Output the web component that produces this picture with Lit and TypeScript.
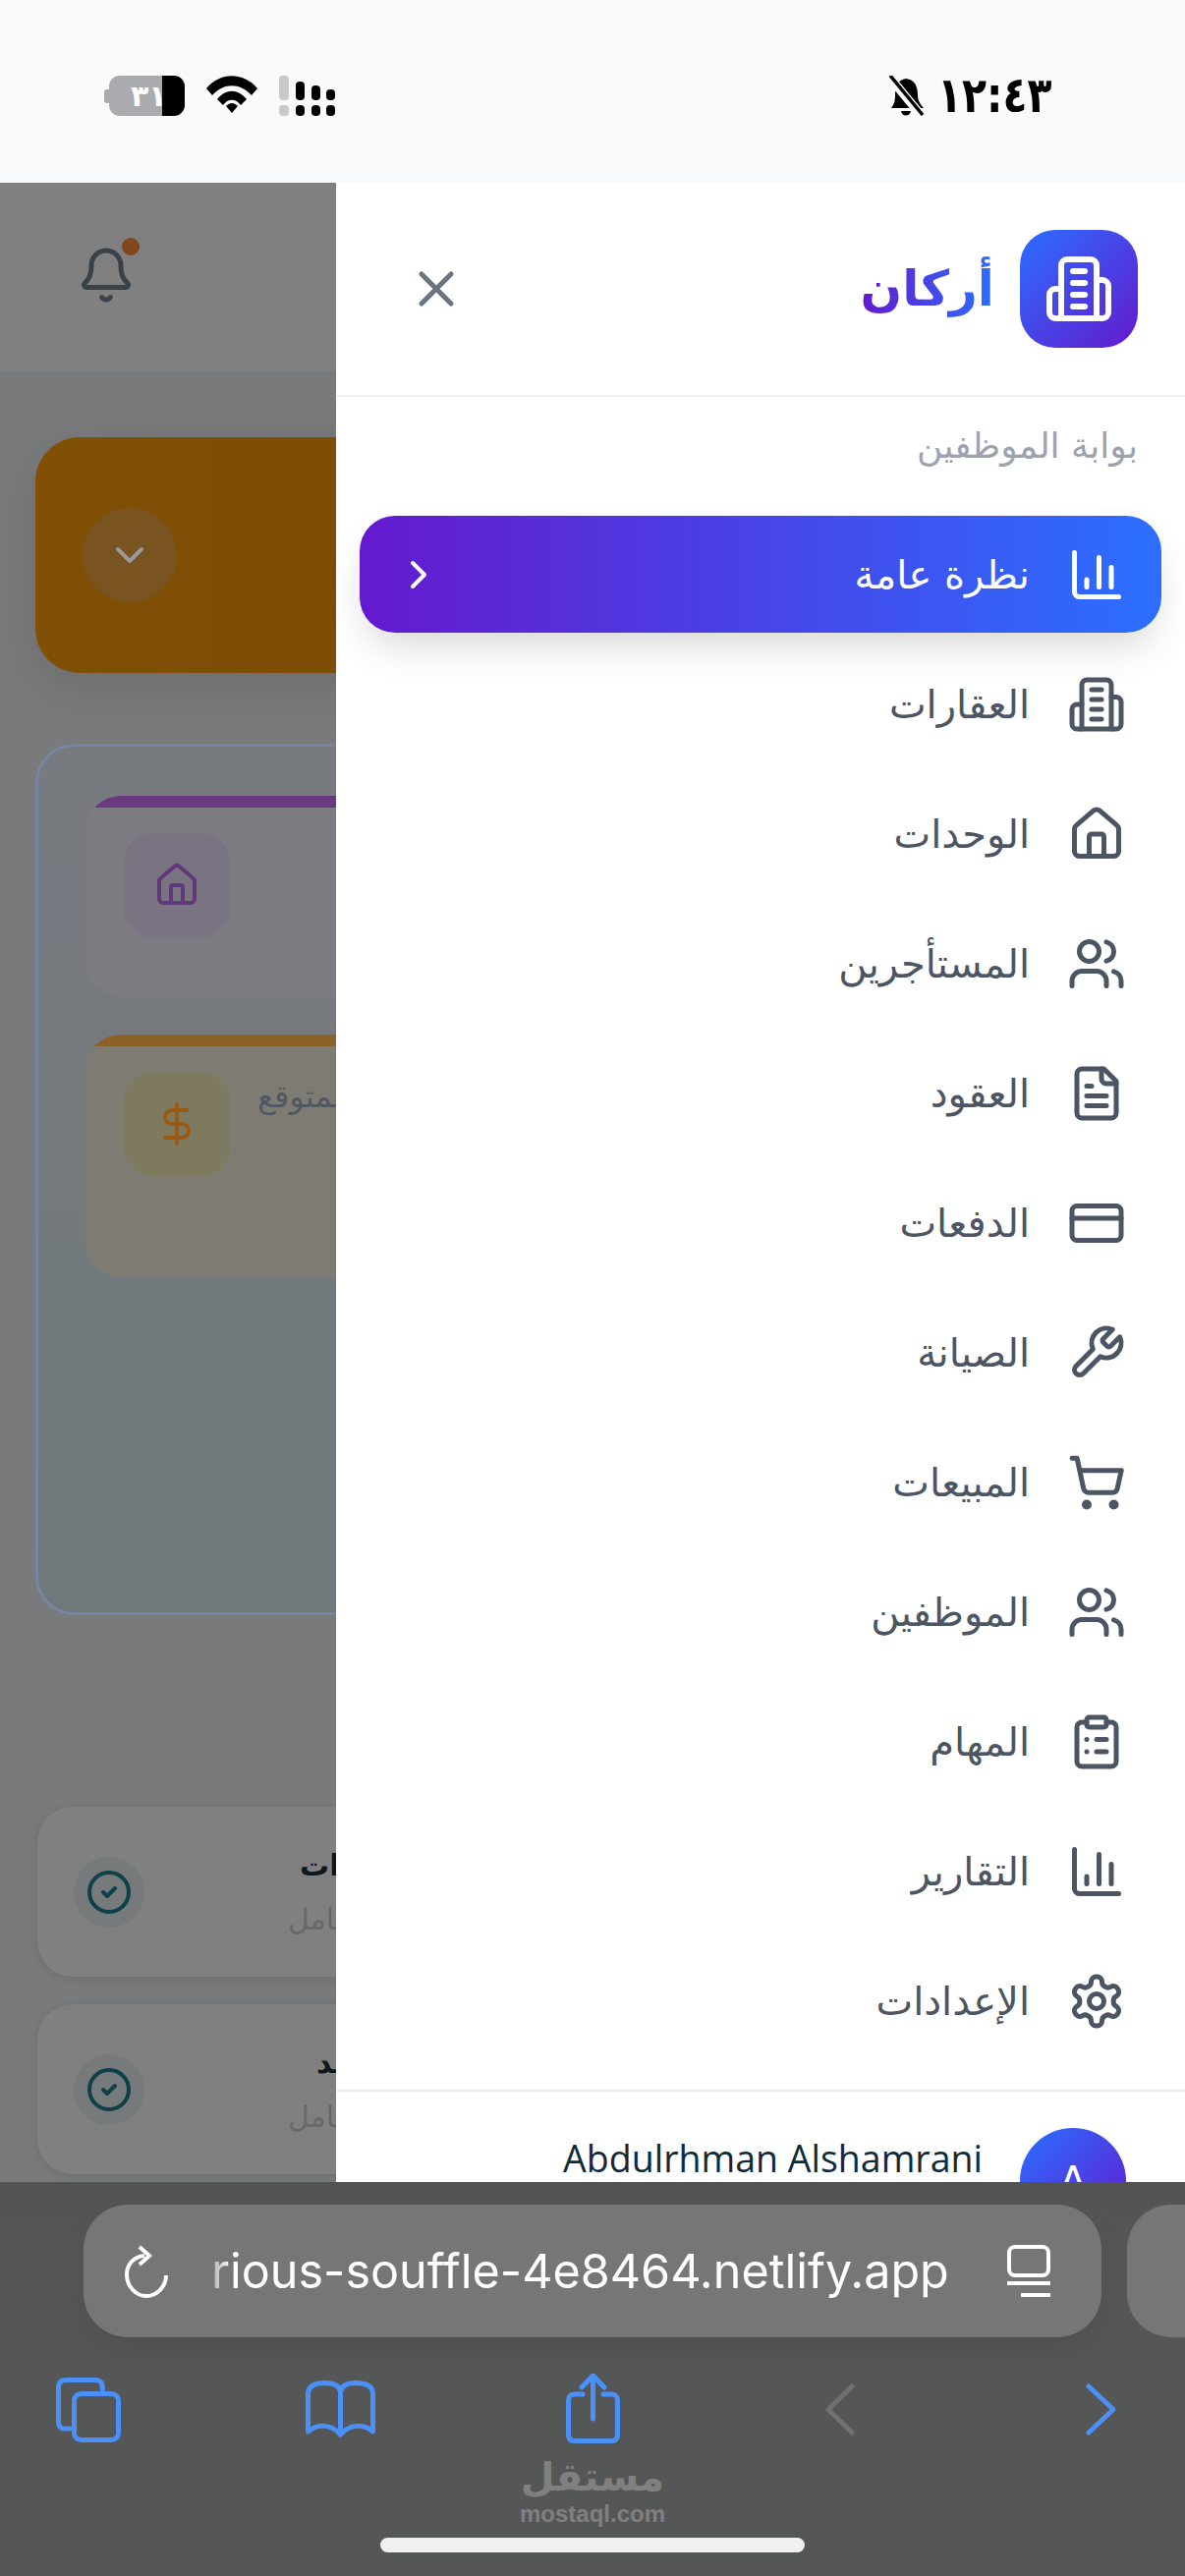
import { LitElement, html, svg, css } from "lit";
import { customElement } from "lit/decorators.js";

// lucide style icon paths, viewBox 24
const icons: Record<string, unknown> = {
  building: svg`<path d="M6 22V4a2 2 0 0 1 2-2h8a2 2 0 0 1 2 2v18Z"/><path d="M6 12H4a2 2 0 0 0-2 2v6a2 2 0 0 0 2 2h2"/><path d="M18 9h2a2 2 0 0 1 2 2v9a2 2 0 0 1-2 2h-2"/><path d="M10 6h4"/><path d="M10 10h4"/><path d="M10 14h4"/><path d="M10 18h4"/>`,
  chart: svg`<path d="M3 3v16a2 2 0 0 0 2 2h16"/><path d="M18 17V9"/><path d="M13 17V5"/><path d="M8 17v-3"/>`,
  home: svg`<path d="M15 21v-8a1 1 0 0 0-1-1h-4a1 1 0 0 0-1 1v8"/><path d="M3 10a2 2 0 0 1 .709-1.528l7-5.999a2 2 0 0 1 2.582 0l7 5.999A2 2 0 0 1 21 10v9a2 2 0 0 1-2 2H5a2 2 0 0 1-2-2z"/>`,
  users: svg`<path d="M16 21v-2a4 4 0 0 0-4-4H6a4 4 0 0 0-4 4v2"/><circle cx="9" cy="7" r="4"/><path d="M22 21v-2a4 4 0 0 0-3-3.87"/><path d="M16 3.13a4 4 0 0 1 0 7.75"/>`,
  file: svg`<path d="M15 2H6a2 2 0 0 0-2 2v16a2 2 0 0 0 2 2h12a2 2 0 0 0 2-2V7Z"/><path d="M14 2v4a2 2 0 0 0 2 2h4"/><path d="M10 9H8"/><path d="M16 13H8"/><path d="M16 17H8"/>`,
  card: svg`<rect width="20" height="14" x="2" y="5" rx="2"/><line x1="2" x2="22" y1="10" y2="10"/>`,
  wrench: svg`<path d="M14.7 6.3a1 1 0 0 0 0 1.4l1.6 1.6a1 1 0 0 0 1.4 0l3.77-3.77a6 6 0 0 1-7.94 7.94l-6.91 6.91a2.12 2.12 0 0 1-3-3l6.91-6.91a6 6 0 0 1 7.94-7.94l-3.76 3.76z"/>`,
  cart: svg`<circle cx="8" cy="21" r="1"/><circle cx="19" cy="21" r="1"/><path d="M2.05 2.05h2l2.66 12.42a2 2 0 0 0 2 1.58h9.78a2 2 0 0 0 1.95-1.57l1.65-7.43H5.12"/>`,
  clipboard: svg`<rect width="8" height="4" x="8" y="2" rx="1"/><path d="M16 4h2a2 2 0 0 1 2 2v14a2 2 0 0 1-2 2H6a2 2 0 0 1-2-2V6a2 2 0 0 1 2-2h2"/><path d="M12 11h4"/><path d="M12 16h4"/><path d="M8 11h.01"/><path d="M8 16h.01"/>`,
  gear: svg`<path d="M12.22 2h-.44a2 2 0 0 0-2 2v.18a2 2 0 0 1-1 1.73l-.43.25a2 2 0 0 1-2 0l-.15-.08a2 2 0 0 0-2.73.73l-.22.38a2 2 0 0 0 .73 2.73l.15.1a2 2 0 0 1 1 1.72v.51a2 2 0 0 1-1 1.74l-.15.09a2 2 0 0 0-.73 2.73l.22.38a2 2 0 0 0 2.73.73l.15-.08a2 2 0 0 1 2 0l.43.25a2 2 0 0 1 1 1.73V20a2 2 0 0 0 2 2h.44a2 2 0 0 0 2-2v-.18a2 2 0 0 1 1-1.73l.43-.25a2 2 0 0 1 2 0l.15.08a2 2 0 0 0 2.73-.73l.22-.39a2 2 0 0 0-.73-2.73l-.15-.08a2 2 0 0 1-1-1.74v-.5a2 2 0 0 1 1-1.74l.15-.09a2 2 0 0 0 .73-2.73l-.22-.38a2 2 0 0 0-2.73-.73l-.15.08a2 2 0 0 1-2 0l-.43-.25a2 2 0 0 1-1-1.73V4a2 2 0 0 0-2-2z"/><circle cx="12" cy="12" r="3"/>`,
  x: svg`<path d="M18 6 6 18"/><path d="m6 6 12 12"/>`,
  chevronRight: svg`<path d="m9 18 6-6-6-6"/>`,
  chevronDown: svg`<path d="m6 9 6 6 6-6"/>`,
  bell: svg`<path d="M10.268 21a2 2 0 0 0 3.464 0"/><path d="M3.262 15.326A1 1 0 0 0 4 17h16a1 1 0 0 0 .74-1.673C19.41 13.956 18 12.499 18 8A6 6 0 0 0 6 8c0 4.499-1.411 5.956-2.738 7.326"/>`,
  dollar: svg`<line x1="12" x2="12" y1="2" y2="22"/><path d="M17 5H9.5a3.5 3.5 0 0 0 0 7h5a3.5 3.5 0 0 1 0 7H6"/>`,
  check: svg`<circle cx="12" cy="12" r="10"/><path d="m9 12 2 2 4-4"/>`,
};

const icon = (name: string, size: number, cls = "") => html`<svg
  class=${cls}
  width=${size}
  height=${size}
  viewBox="0 0 24 24"
  fill="none"
  stroke="currentColor"
  stroke-width="2"
  stroke-linecap="round"
  stroke-linejoin="round"
>${icons[name]}</svg>`;

const menu = [
  { label: "نظرة عامة", icon: "chart", active: true },
  { label: "العقارات", icon: "building" },
  { label: "الوحدات", icon: "home" },
  { label: "المستأجرين", icon: "users" },
  { label: "العقود", icon: "file" },
  { label: "الدفعات", icon: "card" },
  { label: "الصيانة", icon: "wrench" },
  { label: "المبيعات", icon: "cart" },
  { label: "الموظفين", icon: "users" },
  { label: "المهام", icon: "clipboard" },
  { label: "التقارير", icon: "chart" },
  { label: "الإعدادات", icon: "gear" },
];

@customElement("app-root")
export class AppRoot extends LitElement {
  statusBar() {
    return html`
      <div class="status">
        <div class="status-left">
          <div class="battery">
            <span class="battery-cap"></span>
            <span class="battery-body"><span class="battery-num">٣١</span></span>
          </div>
          <svg width="52" height="38" viewBox="0 0 52 38" class="wifi">
            <path d="M0 13 C14 -4 38 -4 52 13 L46 20 C34 7 18 7 6 20Z" />
            <path d="M11 24 C20 13 32 13 41 24 L35 30 C30 23 22 23 17 30Z" />
            <path d="M20 31 C24 27 28 27 32 31 L26 38Z" />
          </svg>
          <svg width="59" height="41" viewBox="0 0 59 41" class="signal">
            <rect x="0" y="0" width="10" height="25" rx="4" fill="#c7c9cd" />
            <rect x="0" y="30" width="10" height="11" rx="4" fill="#c7c9cd" />
            <rect x="17" y="6" width="9" height="19" rx="4" />
            <rect x="17" y="30" width="9" height="11" rx="4" />
            <rect x="33" y="10" width="9" height="15" rx="4" />
            <rect x="33" y="30" width="9" height="11" rx="4" />
            <rect x="48" y="14" width="9" height="11" rx="4" />
            <rect x="48" y="30" width="9" height="11" rx="4" />
          </svg>
        </div>
        <div class="status-right">
          <svg width="40" height="42" viewBox="0 0 40 42" class="mute">
            <path d="M20 3 C29 4 32 11 32 20 C32 26 35 29 38 33 L5 33 C8 29 9 26 9 20 C9 11 12 4 20 3Z" />
            <path d="M15 36 H25 C24 42 16 42 15 36Z" />
            <path d="M3 1 L36 41" stroke="#f9fafb" stroke-width="9" />
            <path d="M4 0 L37 40" stroke="#000" stroke-width="3.5" />
          </svg>
          <span class="time">١٢:٤٣</span>
        </div>
      </div>
    `;
  }

  // the dimmed page behind the drawer, colours as they look under the overlay
  backPage() {
    return html`
      <div class="page">
        <div class="topbar">
          <div class="bell-wrap">
            ${icon("bell", 60)}
            <span class="bell-dot"></span>
          </div>
        </div>
        <div class="hero">
          <div class="hero-toggle">${icon("chevronDown", 48)}</div>
        </div>
        <div class="panel">
          <div class="stat purple">
            <div class="band"></div>
            <div class="stat-body">
              <div class="stat-icon">${icon("home", 48)}</div>
            </div>
          </div>
          <div class="stat amber">
            <div class="band"></div>
            <div class="stat-body">
              <div class="stat-icon">${icon("dollar", 48)}</div>
              <div class="stat-label">الإيراد المتوقع</div>
            </div>
          </div>
        </div>
        <div class="rows">
          <div class="row">
            <div class="row-icon">${icon("check", 48)}</div>
            <div class="row-text">
              <div class="row-title">الإشعارات</div>
              <div class="row-sub">مكتمل بالكامل</div>
            </div>
          </div>
          <div class="row">
            <div class="row-icon">${icon("check", 48)}</div>
            <div class="row-text">
              <div class="row-title short">عقد</div>
              <div class="row-sub">مكتمل بالكامل</div>
            </div>
          </div>
        </div>
      </div>
    `;
  }

  drawer() {
    return html`
      <aside class="drawer" dir="rtl">
        <div class="drawer-head">
          <div class="brand">
            <div class="logo">${icon("building", 72)}</div>
            <div class="brand-name">أركان</div>
          </div>
          <div class="close">${icon("x", 60)}</div>
        </div>
        <div class="portal">بوابة الموظفين</div>
        <nav class="nav">
          ${menu.map(
            (m) => html`
              <div class="item ${m.active ? "active" : ""}">
                ${icon(m.icon, 60)}
                <span class="item-label">${m.label}</span>
                ${m.active ? icon("chevronRight", 48, "item-chevron") : ""}
              </div>
            `,
          )}
        </nav>
        <div class="user">
          <div class="avatar">A</div>
          <div class="user-name" dir="ltr">Abdulrhman Alshamrani</div>
        </div>
      </aside>
    `;
  }

  safari() {
    return html`
      <div class="safari">
        <div class="url-row">
          <div class="url-pill">
            <svg width="44" height="54" viewBox="0 0 44 54" class="reload">
              <path d="M20 11 C8 12 2 21 2 30 C2 42 11 52 22 52 C33 52 42 42 42 31" />
              <path d="M15 2 L25 11 L15 20" />
            </svg>
            <span class="url">rious-souffle-4e8464.netlify.app</span>
            <svg width="44" height="54" viewBox="0 0 44 54" class="reader">
              <rect x="2" y="2" width="40" height="29" rx="6" />
              <path d="M0 39 H44" />
              <path d="M14 51 H44" />
            </svg>
          </div>
          <div class="url-next"></div>
        </div>
        <div class="tools">
          <svg width="66" height="66" viewBox="0 0 66 66" class="tabs">
            <path d="M14 52 H9 C4 52 2.500 49 2.500 45 V10 C2.500 5 5 2.500 10 2.500 H40 C45 2.500 47.500 5 47.500 12" />
            <rect x="18.500" y="16.500" width="45" height="47" rx="7" />
          </svg>
          <svg width="71" height="58" viewBox="0 0 71 58" class="book">
            <path d="M35.500 12 C35.500 6 29 2.500 20 2.500 C8 2.500 2.500 7 2.500 14 V52 C12 44 26 44 35.500 55 C45 44 59 44 68.500 52 V14 C68.500 7 63 2.500 51 2.500 C42 2.500 35.500 6 35.500 12 V52" />
          </svg>
          <svg width="55" height="71" viewBox="0 0 55 71" class="share">
            <path d="M17 21 H9 C4.500 21 2.500 23 2.500 28 V62 C2.500 66 4.500 68.500 9 68.500 H46 C50.500 68.500 52.500 66 52.500 62 V28 C52.500 23 50.500 21 46 21 H38" />
            <path d="M27.500 3 V46" />
            <path d="M16 14 L27.500 2 L39 14" />
          </svg>
          <svg width="30" height="53" viewBox="0 0 30 53" class="back">
            <path d="M27 3 L3 26.500 L27 50" />
          </svg>
          <svg width="31" height="53" viewBox="0 0 31 53" class="forward">
            <path d="M3 3 L28 26.500 L3 50" />
          </svg>
        </div>
        <div class="watermark">
          <div class="wm-ar">مستقل</div>
          <div class="wm-en">mostaql.com</div>
        </div>
        <div class="home-bar"></div>
      </div>
    `;
  }

  render() {
    return html`
      ${this.statusBar()}
      <div class="stage">${this.backPage()} ${this.drawer()}</div>
      ${this.safari()}
    `;
  }

  static styles = css`
    :host {
      display: block;
      width: 1206px;
      height: 2622px;
      overflow: hidden;
      font-family: "DejaVu Sans", sans-serif;
      background: #f9fafb;
    }

    /* status bar */
    .status {
      height: 186px;
      box-sizing: border-box;
      padding: 77px 137px 0 106px;
      display: flex;
      justify-content: space-between;
      align-items: flex-start;
      background: #f9fafb;
    }
    .status-left {
      display: flex;
      align-items: flex-start;
      gap: 22px;
    }
    .status-right {
      display: flex;
      align-items: flex-start;
      gap: 12px;
    }
    .battery {
      display: flex;
      align-items: center;
      width: 82px;
      height: 41px;
    }
    .battery-cap {
      width: 5px;
      height: 14px;
      border-radius: 3px 0 0 3px;
      background: #a9abaf;
    }
    .battery-body {
      flex: 1;
      height: 100%;
      border-radius: 11px;
      background: linear-gradient(90deg, #a9abaf 0 70%, #000 70%);
      display: flex;
      align-items: center;
      padding-left: 22px;
      box-sizing: border-box;
    }
    .battery-num {
      color: #fff;
      font-size: 30px;
      font-weight: 700;
      line-height: 1;
    }
    .wifi,
    .signal,
    .mute {
      display: block;
      fill: #000;
    }
    .time {
      display: block;
      width: 115px;
      font-size: 50px;
      font-weight: 700;
      line-height: 40px;
      white-space: nowrap;
      color: #000;
      transform: scaleX(0.82);
      transform-origin: left center;
    }

    .stage {
      position: relative;
      height: 2035px;
      overflow: hidden;
    }

    /* page under the drawer */
    .page {
      background: #797a7b;
      height: 100%;
      display: flex;
      flex-direction: column;
      padding-bottom: 40px;
      box-sizing: border-box;
    }
    .topbar {
      height: 192px;
      flex: none;
      background: #808080;
      padding: 64px 0 0 78px;
      box-sizing: border-box;
    }
    .bell-wrap {
      position: relative;
      width: 60px;
      color: #3a4248;
    }
    .bell-wrap svg {
      display: block;
    }
    .bell-dot {
      position: absolute;
      top: -8px;
      right: -4px;
      width: 18px;
      height: 18px;
      border-radius: 50%;
      background: #80481c;
    }
    .hero {
      flex: none;
      margin: 67px 36px 0;
      height: 240px;
      border-radius: 45px;
      background: linear-gradient(90deg, #815006, #7c4a06 55%);
      box-shadow: 0 16px 40px rgba(90, 90, 90, 0.35);
      display: flex;
      align-items: center;
      padding-left: 48px;
    }
    .hero-toggle {
      width: 96px;
      height: 96px;
      border-radius: 50%;
      background: #7a5420;
      color: #9a9a9a;
      display: flex;
      align-items: center;
      justify-content: center;
    }
    .panel {
      flex: none;
      margin: 72px 36px 0;
      height: 887px;
      box-sizing: border-box;
      padding: 50px 48px 0;
      border: 3px solid #7585a2;
      border-radius: 40px;
      background: linear-gradient(180deg, #787a80, #6f797b);
      display: flex;
      flex-direction: column;
      gap: 38px;
    }
    .stat {
      border-radius: 36px;
      overflow: hidden;
    }
    .band {
      height: 12px;
    }
    .stat-body {
      display: flex;
      align-items: flex-start;
      gap: 28px;
      padding: 26px 39px 0;
    }
    .stat-icon {
      width: 108px;
      height: 106px;
      flex: none;
      border-radius: 30px;
      display: flex;
      align-items: center;
      justify-content: center;
    }
    .purple {
      height: 205px;
      background: #7c7b82;
    }
    .purple .band {
      background: #6a3a80;
    }
    .purple .stat-icon {
      background: #7a7382;
      color: #603a78;
    }
    .amber {
      height: 247px;
      background: #7e7c72;
    }
    .amber .band {
      background: #8a6128;
    }
    .amber .stat-icon {
      background: #7d7a60;
      color: #9a5a14;
    }
    .stat-label {
      font-size: 32px;
      color: #4f5862;
      white-space: nowrap;
      direction: ltr;
      margin-top: 6px;
    }
    .rows {
      flex: none;
      margin: 195px 36px 0 38px;
      display: flex;
      flex-direction: column;
      gap: 28px;
    }
    .row {
      height: 173px;
      border-radius: 36px;
      background: #808080;
      box-shadow: 0 2px 8px rgba(60, 60, 60, 0.2);
      display: flex;
      align-items: center;
      padding-left: 37px;
    }
    .row-icon {
      width: 72px;
      height: 72px;
      flex: none;
      border-radius: 50%;
      background: #767a7a;
      color: #0f3f48;
      display: flex;
      align-items: center;
      justify-content: center;
    }
    .row-text {
      margin-left: 146px;
      white-space: nowrap;
    }
    .row-title {
      font-size: 30px;
      font-weight: 700;
      color: #10171c;
      padding-left: 12px;
    }
    .row-title.short {
      padding-left: 29px;
    }
    .row-sub {
      margin-top: 20px;
      font-size: 30px;
      color: #66686b;
    }

    /* drawer */
    .drawer {
      position: absolute;
      top: 0;
      right: 0;
      bottom: 0;
      width: 864px;
      background: #fff;
    }
    .drawer-head {
      height: 218px;
      box-sizing: border-box;
      border-bottom: 2px solid #eceef0;
      padding: 48px 48px 0 72px;
      display: flex;
      justify-content: space-between;
      align-items: flex-start;
    }
    .brand {
      display: flex;
      align-items: center;
      gap: 26px;
    }
    .logo {
      width: 120px;
      height: 120px;
      border-radius: 36px;
      background: linear-gradient(135deg, #2b6fff, #6419ce);
      color: #fff;
      display: flex;
      align-items: center;
      justify-content: center;
    }
    .brand-name {
      font-size: 50px;
      font-weight: 700;
      line-height: 90px;
      background: linear-gradient(270deg, #2b6fff, #6419ce);
      -webkit-background-clip: text;
      background-clip: text;
      color: transparent;
    }
    .close {
      height: 120px;
      display: flex;
      align-items: center;
      color: #6b7280;
    }
    .portal {
      height: 60px;
      margin-top: 20px;
      padding: 0 48px;
      font-size: 36px;
      line-height: 60px;
      color: #9ca3af;
    }
    .nav {
      margin-top: 41px;
      padding: 0 24px;
      display: flex;
      flex-direction: column;
      gap: 13px;
    }
    .item {
      height: 119px;
      box-sizing: border-box;
      padding: 0 36px;
      border-radius: 36px;
      display: flex;
      align-items: center;
      gap: 38px;
      color: #4b5563;
    }
    .item svg {
      flex: none;
    }
    .item-label {
      font-size: 40px;
    }
    .item.active {
      color: #fff;
      background: linear-gradient(270deg, #2b6fff, #6419ce);
      box-shadow: 0 20px 40px -8px rgba(0, 0, 0, 0.16);
    }
    .item-chevron {
      margin-right: auto;
    }
    .user {
      margin-top: 31px;
      border-top: 2px solid #eceef0;
      padding: 37px 60px 0 0;
      display: flex;
      align-items: flex-start;
      gap: 38px;
    }
    .avatar {
      width: 108px;
      height: 108px;
      flex: none;
      border-radius: 50%;
      background: linear-gradient(135deg, #2b6fff, #6419ce);
      color: #fff;
      font-size: 40px;
      display: flex;
      align-items: center;
      justify-content: center;
    }
    .user-name {
      font-family: "Open Sans", sans-serif;
      font-size: 37.500px;
      line-height: 42px;
      margin-top: 10px;
      color: #0f2b3a;
    }

    /* safari chrome */
    .safari {
      position: relative;
      height: 401px;
      overflow: hidden;
      background: linear-gradient(180deg, #525353, #555757 60px);
    }
    .url-row {
      display: flex;
      gap: 26px;
      padding: 23px 0 0 85px;
    }
    .url-pill {
      width: 1036px;
      height: 135px;
      flex: none;
      box-sizing: border-box;
      border-radius: 45px;
      background: #757676;
      box-shadow: 0 12px 30px rgba(0, 0, 0, 0.08);
      display: flex;
      align-items: center;
      padding: 0 52px 0 42px;
      gap: 44px;
    }
    .url-next {
      width: 200px;
      height: 135px;
      flex: none;
      border-radius: 45px;
      background: #757676;
    }
    .reload,
    .reader {
      flex: none;
      fill: none;
      stroke: #fff;
      stroke-width: 4;
    }
    .url {
      flex: 1;
      font-family: Inter, sans-serif;
      font-size: 48.500px;
      color: #fff;
      white-space: nowrap;
      -webkit-mask-image: linear-gradient(90deg, rgba(0, 0, 0, 0.4), #000 20px);
      mask-image: linear-gradient(90deg, rgba(0, 0, 0, 0.4), #000 20px);
    }
    .tools {
      display: flex;
      align-items: flex-start;
      margin-top: 41px;
      padding-left: 57px;
    }
    .tools svg {
      flex: none;
      fill: none;
      stroke: #4a90f8;
      stroke-width: 5;
      stroke-linecap: round;
      stroke-linejoin: round;
    }
    .book {
      margin: 3px 0 0 188px;
    }
    .share {
      margin: -4px 0 0 194px;
    }
    .tools .back {
      margin: 6px 0 0 209px;
      stroke: #6f7172;
    }
    .forward {
      margin: 6px 0 0 235px;
    }
    .watermark {
      position: absolute;
      left: 503px;
      top: 274px;
      width: 200px;
      text-align: center;
      color: #808080;
    }
    .wm-ar {
      font-size: 40px;
      font-weight: 700;
      line-height: 52px;
    }
    .wm-en {
      font-family: "Liberation Sans", sans-serif;
      font-size: 24px;
      font-weight: 700;
      line-height: 24px;
    }
    .home-bar {
      position: absolute;
      left: 387px;
      top: 362px;
      width: 432px;
      height: 15px;
      border-radius: 8px;
      background: #f0f0f0;
    }
  `;
}
